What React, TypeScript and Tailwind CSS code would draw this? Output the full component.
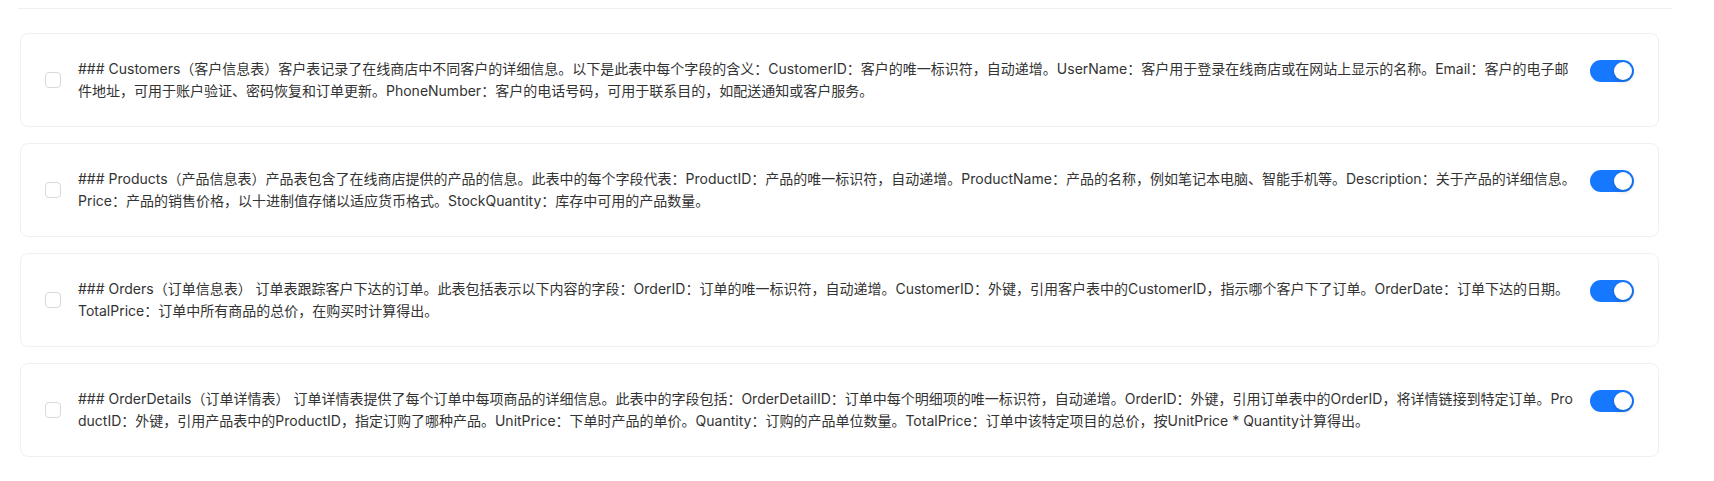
import React from 'react';

interface TableDoc {
  id: string;
  lines: string[];
  enabled: boolean;
}

const docs: TableDoc[] = [
  {
    id: 'customers',
    enabled: true,
    lines: [
      '### Customers（客户信息表）客户表记录了在线商店中不同客户的详细信息。以下是此表中每个字段的含义：CustomerID：客户的唯一标识符，自动递增。UserName：客户用于登录在线商店或在网站上显示的名称。Email：客户的电子邮',
      '件地址，可用于账户验证、密码恢复和订单更新。PhoneNumber：客户的电话号码，可用于联系目的，如配送通知或客户服务。',
    ],
  },
  {
    id: 'products',
    enabled: true,
    lines: [
      '### Products（产品信息表）产品表包含了在线商店提供的产品的信息。此表中的每个字段代表：ProductID：产品的唯一标识符，自动递增。ProductName：产品的名称，例如笔记本电脑、智能手机等。Description：关于产品的详细信息。',
      'Price：产品的销售价格，以十进制值存储以适应货币格式。StockQuantity：库存中可用的产品数量。',
    ],
  },
  {
    id: 'orders',
    enabled: true,
    lines: [
      '### Orders（订单信息表） 订单表跟踪客户下达的订单。此表包括表示以下内容的字段：OrderID：订单的唯一标识符，自动递增。CustomerID：外键，引用客户表中的CustomerID，指示哪个客户下了订单。OrderDate：订单下达的日期。',
      'TotalPrice：订单中所有商品的总价，在购买时计算得出。',
    ],
  },
  {
    id: 'orderdetails',
    enabled: true,
    lines: [
      '### OrderDetails（订单详情表） 订单详情表提供了每个订单中每项商品的详细信息。此表中的字段包括：OrderDetailID：订单中每个明细项的唯一标识符，自动递增。OrderID：外键，引用订单表中的OrderID，将详情链接到特定订单。Pro',
      'ductID：外键，引用产品表中的ProductID，指定订购了哪种产品。UnitPrice：下单时产品的单价。Quantity：订购的产品单位数量。TotalPrice：订单中该特定项目的总价，按UnitPrice * Quantity计算得出。',
    ],
  },
];

const Toggle: React.FC<{ on: boolean }> = ({ on }) => (
  <span
    className={`relative inline-flex h-[22px] w-[44px] shrink-0 items-center rounded-full ${
      on ? 'bg-[#1677ff]' : 'bg-[#bfbfbf]'
    }`}
  >
    <span
      className={`absolute top-[2px] h-[18px] w-[18px] rounded-full bg-white shadow-[0_2px_4px_rgba(0,35,11,0.2)] ${
        on ? 'left-[24px]' : 'left-[2px]'
      }`}
    />
  </span>
);

export default function App() {
  return (
    <div
      className="min-h-screen bg-white text-[14px] leading-[22px] text-[#333]"
      style={{ fontFamily: 'Inter, "Noto Sans CJK SC", sans-serif' }}
    >
      {/* divider */}
      <div className="pt-[8px]">
        <div className="ml-[18px] h-px w-[1654px] bg-[#f0f0f0]" />
      </div>

      {/* Table descriptions */}
      <div className="ml-[20px] mt-[24px] flex w-[1639px] flex-col gap-4">
        {docs.map((doc) => (
          <div
            key={doc.id}
            className="flex h-[94px] items-center rounded-lg border border-[#f0f0f0] bg-white px-6"
          >
            <span className="mr-[17px] h-4 w-4 shrink-0 rounded-[4px] border border-[#d9d9d9] bg-white" />
            <div className="flex min-w-0 flex-1 items-start">
              <div className="min-w-0 flex-1 whitespace-nowrap">
                {doc.lines.map((line, i) => (
                  <div key={i}>{line}</div>
                ))}
              </div>
              <div className="ml-6 mt-[2px] shrink-0">
                <Toggle on={doc.enabled} />
              </div>
            </div>
          </div>
        ))}
      </div>
    </div>
  );
}
